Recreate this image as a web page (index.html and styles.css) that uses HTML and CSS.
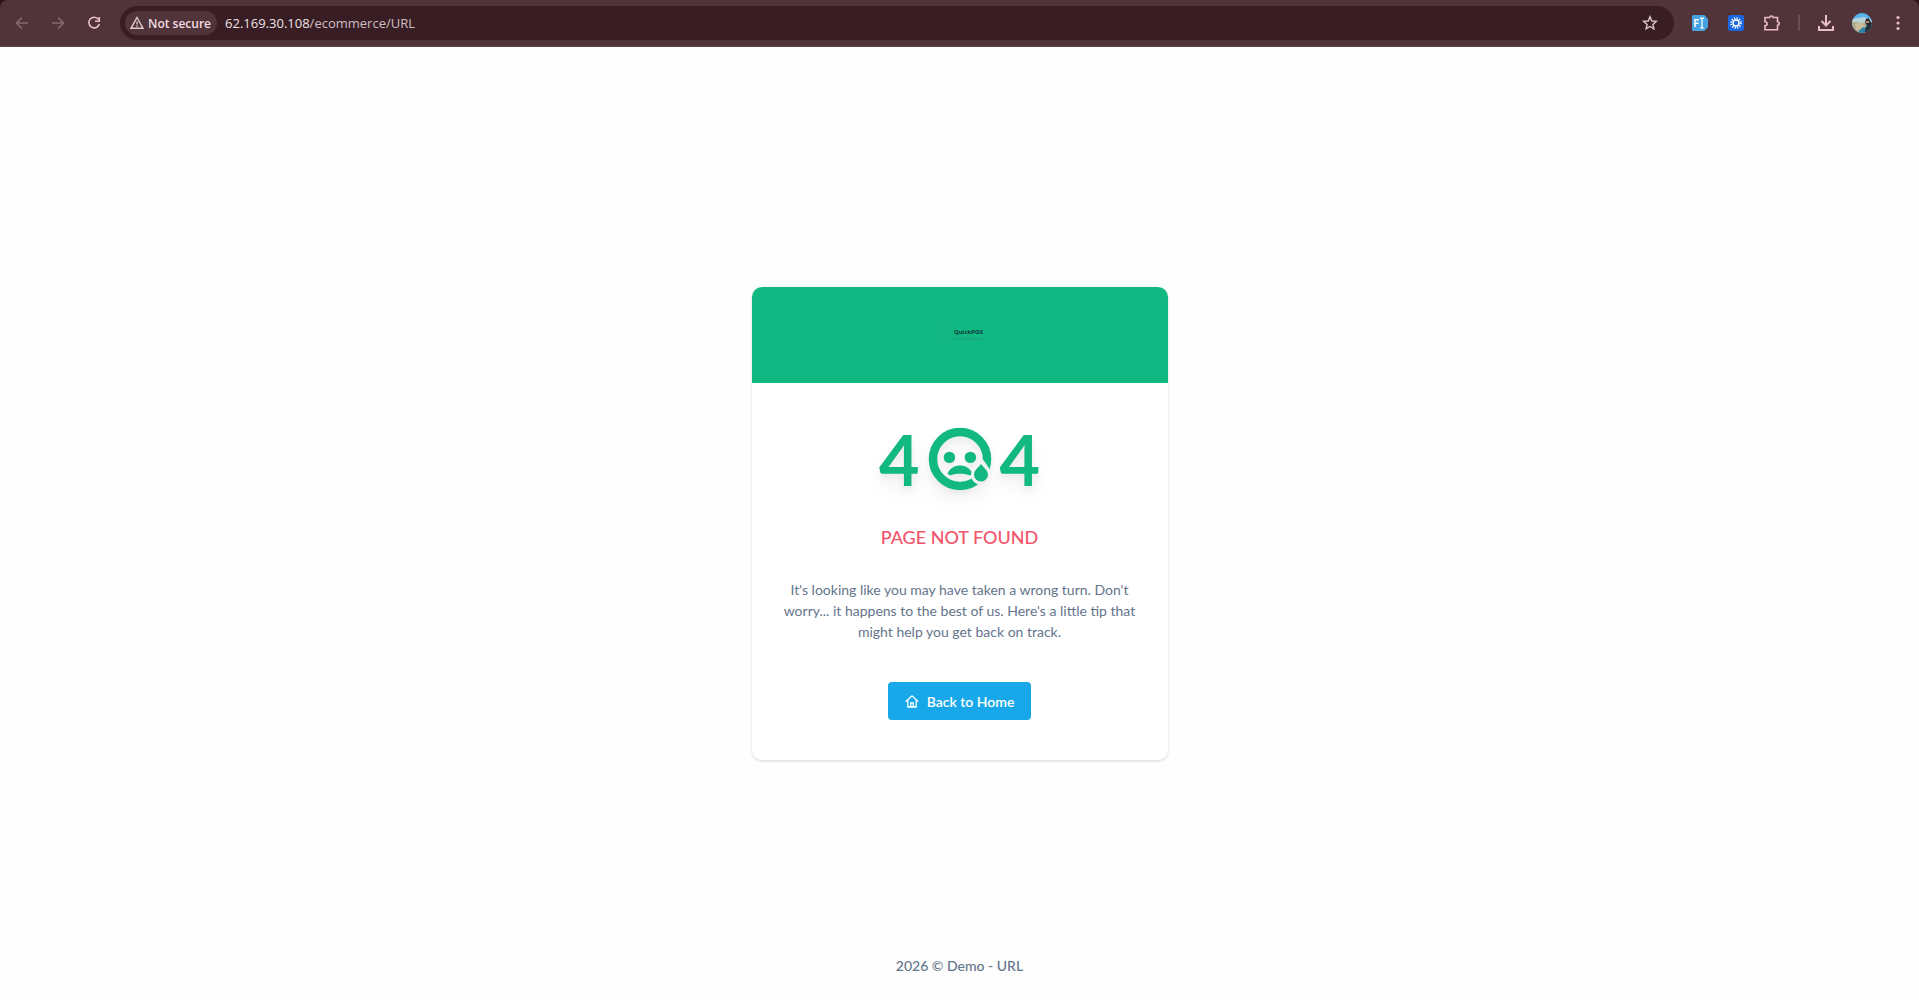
FILE: index.html
```
<!DOCTYPE html>
<html lang="en">
  <head>
    <meta charset="UTF-8">
    <meta name="viewport" content="width=device-width, initial-scale=1.0">
    <title>404 - Page Not Found</title>
    <link rel="stylesheet" href="styles.css">
  </head>
  <body>
    <header class="browser">
      <div class="toolbar">
        <div class="nav-buttons">
          <button class="icon-button disabled" aria-label="Back">
            <svg width="16" height="16" viewBox="0 0 16 16"><path d="M14 8H3M8 2.500 2.500 8 8 13.500"/></svg>
          </button>
          <button class="icon-button disabled" aria-label="Forward">
            <svg width="16" height="16" viewBox="0 0 16 16"><path d="M2 8h11M8 2.500 13.500 8 8 13.500"/></svg>
          </button>
          <button class="icon-button" aria-label="Reload">
            <svg width="16" height="16" viewBox="0 0 16 16"><path d="M12.500 4.500A5.300 5.300 0 1 0 13.300 9M13.300 2v4.200H9"/></svg>
          </button>
        </div>
        <div class="address-bar">
          <button class="security-chip">
            <svg width="16" height="16" viewBox="0 0 16 16"><path d="M8 2.500 14 13.300H2zM8 6.500v3M8 10.600v1.300"/></svg>
            Not secure
          </button>
          <p class="url">62.169.30.108<span>/ecommerce/URL</span></p>
          <button class="star" aria-label="Bookmark">
            <svg width="16" height="16" viewBox="0 0 16 16"><path d="M8 1.800 9.800 6l4.500.4-3.400 3 1 4.400L8 11.500l-3.900 2.300 1-4.400-3.400-3L6.200 6z"/></svg>
          </button>
        </div>
        <div class="extensions">
          <button class="icon-button" aria-label="Text extension">
            <svg class="logo" width="16" height="16" viewBox="0 0 16 16">
              <path fill="#45a3e0" d="M1.500 0H12.500L16 4v8l-3.500 4h-11A1.500 1.500 0 0 1 0 14.500v-13A1.500 1.500 0 0 1 1.500 0z"/>
              <path stroke="#fff" stroke-width="1.500" fill="none" d="M3 12V4.700h4M3 8.300h3.500"/>
              <path stroke="#fff" stroke-width="1.200" fill="none" d="M8 3.200h1.300L10 4l.7-.8H12M8 13h1.300l.7-.8.7.8H12M10 4v8.500"/>
            </svg>
          </button>
          <button class="icon-button" aria-label="Sun extension">
            <svg class="logo" width="16" height="16" viewBox="0 0 16 16">
              <rect width="16" height="16" rx="2.500" fill="#1c68df"/>
              <circle cx="8" cy="8" r="3" stroke="#fff" stroke-width="1.400" fill="none"/>
              <circle cx="8" cy="8" r="4.800" stroke="#fff" stroke-width="2" stroke-dasharray="1.200 1.313" fill="none"/>
            </svg>
          </button>
          <button class="icon-button" aria-label="Extensions">
            <svg width="18" height="18" viewBox="0 0 18 18"><path d="M2 3.500h4.800C6.800 1.400 10.200 1.400 10.200 3.500H14.500V7.800C16.800 7.800 16.800 11.200 14.500 11.200V15.800H2V11.800C4.800 11.500 4.800 8 2 7.700z"/></svg>
          </button>
        </div>
        <div class="divider"></div>
        <div class="profile-buttons">
          <button class="icon-button" aria-label="Downloads">
            <svg width="18" height="18" viewBox="0 0 18 18"><path stroke-width="2" d="M9 1v10M4.500 7 9 11.500 13.500 7M2 12v4h14v-4"/></svg>
          </button>
          <button class="icon-button" aria-label="Profile">
            <svg class="logo" width="20" height="20" viewBox="0 0 20 20">
              <clipPath id="avatar"><circle cx="10" cy="10" r="10"/></clipPath>
              <g clip-path="url(#avatar)">
                <path fill="#58b5ec" d="M0 0h20v20H0z"/>
                <path fill="#b9d3d8" d="M0 6 12 4l8 3v5H0z"/>
                <path fill="#a9a98c" d="M0 9l14 1v10H0z"/>
                <path fill="#c9bd9c" d="M3 11l8-2 1 5-8 4z"/>
                <path fill="#252c34" d="M14 6c2-2 4 0 4 2l2 2v7l-6 3-3-3 4-4-2-4z"/>
                <path fill="#c08962" d="M14 8h3v2h-3z"/>
                <path fill="#2a82a8" d="M7 18l4-4 3 2-2 4H7z"/>
              </g>
            </svg>
          </button>
          <button class="icon-button" aria-label="Menu">
            <svg class="dots" width="16" height="16" viewBox="0 0 16 16"><circle cx="8" cy="2.500" r="1.600"/><circle cx="8" cy="8" r="1.600"/><circle cx="8" cy="13.500" r="1.600"/></svg>
          </button>
        </div>
      </div>
    </header>

    <main class="page">
      <section class="card">
        <div class="card-header">
          <div class="brand">
            <svg width="14" height="16" viewBox="0 0 14 16"><rect x="1" y="1" width="12" height="14" rx="3"/><path d="M6 6h3l-2 3"/></svg>
            <div>
              <p class="brand-name">QuickPOS</p>
              <p class="brand-tagline">Point of Sale System</p>
            </div>
          </div>
        </div>
        <div class="card-body">
          <div class="error-code">
            <span>4</span>
            <!-- sad face used as the zero -->
            <svg width="64" height="64" viewBox="0 0 64 64">
              <mask id="tear-gap">
                <rect width="64" height="64" fill="#fff"/>
                <path d="M53 35C50 39 46 43 46 48a7 7 0 0 0 14 0c0-5-4-9-7-13z" fill="#000" stroke="#000" stroke-width="6"/>
              </mask>
              <g mask="url(#tear-gap)">
                <circle class="face" cx="32" cy="32" r="27"/>
                <path d="M19.500 46.500C22 41 27 38.500 32 38.500S42 41 44.500 46.500L42 48.500C37 46 27 46 22 48.500z"/>
              </g>
              <circle cx="21.400" cy="30.400" r="5.700"/>
              <circle cx="42.400" cy="30.400" r="5.700"/>
              <path d="M53 37C50 41 46 43 46 48a7 6.500 0 0 0 14 0c0-5-4-7-7-11z"/>
            </svg>
            <span>4</span>
          </div>
          <h1 class="title">PAGE NOT FOUND</h1>
          <p class="message">It's looking like you may have taken a wrong turn. Don't worry... it happens to the best of us. Here's a little tip that might help you get back on track.</p>
          <a class="home-link" href="#">
            <svg width="14" height="14" viewBox="0 0 14 14"><path d="M.8 7.500 7 1.800l6.200 5.700M2.800 6v7h8.400V6M5.700 13V9h2.600v4"/></svg>
            Back to Home
          </a>
        </div>
      </section>
      <footer class="footer">2026 © Demo - URL</footer>
    </main>
  </body>
</html>
```

FILE: styles.css
```
* {
    box-sizing: border-box;
}

body {
    margin: 0;
    min-height: 100vh;
    display: flex;
    flex-direction: column;
    background-color: #fefefe;
    color: #64748b;
    font-family: Lato, sans-serif;
    font-size: 14px;
    line-height: 21px;
}

p, h1 {
    margin: 0;
}

button {
    padding: 0;
    border: none;
    background: none;
    font: inherit;
    cursor: pointer;
}

/* Browser bar */
.browser {
    background-color: #2c1519;
    font-family: "Open Sans", sans-serif;
}

.toolbar {
    display: flex;
    align-items: center;
    height: 47px;
    padding: 0 11px 0 12px;
    background-color: #50343a;
    border-bottom: 1px solid #5f474c;
    border-radius: 8px 8px 0 0;
}

.nav-buttons,
.extensions,
.profile-buttons {
    display: flex;
    align-items: center;
    gap: 16px;
}

.icon-button {
    display: flex;
    align-items: center;
    justify-content: center;
    width: 20px;
    height: 20px;
}

.toolbar svg {
    fill: none;
    stroke: #e8bdc9;
    stroke-width: 1.6px;
}

.toolbar svg.logo {
    stroke: none;
}

.toolbar svg.dots {
    fill: #e8bdc9;
    stroke: none;
}

.toolbar .disabled svg {
    stroke: #876a71;
}

.address-bar {
    flex: 1;
    display: flex;
    align-items: center;
    height: 34px;
    margin: 0 16px;
    padding: 0 16px 0 5px;
    border-radius: 17px;
    background-color: #381e24;
}

.security-chip {
    display: flex;
    align-items: center;
    gap: 3px;
    height: 24px;
    padding: 0 6px 0 4px;
    border-radius: 12px;
    background-color: #50343a;
    color: #f3dce2;
    font-size: 12px;
    font-weight: 600;
}

.address-bar svg {
    display: block;
    stroke: #dcc8cd;
    stroke-width: 1.4px;
}

.url {
    flex: 1;
    margin-left: 8px;
    color: #f0e2e5;
    font-size: 13px;
}

.url span {
    color: #cfbec2;
}

.divider {
    width: 2px;
    height: 16px;
    margin: 0 16px;
    background-color: #6b4d54;
}

/* 404 page */
.page {
    flex: 1;
    display: grid;
    grid-template-rows: 1fr auto 1fr;
    justify-items: center;
}

.card {
    grid-row: 2;
    width: 416px;
    max-width: 100%;
    border-radius: 10px;
    background-color: #ffffff;
    box-shadow: 0 1px 3px rgba(0, 0, 0, 0.16);
    overflow: hidden;
}

.card-header {
    display: flex;
    align-items: center;
    justify-content: center;
    height: 96px;
    background-color: #12b881;
}

.brand {
    display: flex;
    align-items: center;
    gap: 4px;
    font-family: "Noto Sans", sans-serif;
}

.brand svg {
    fill: none;
    stroke: #1bb182;
}

.brand-name {
    color: #0b3b3c;
    font-size: 6px;
    font-weight: 700;
    line-height: 7px;
}

.brand-tagline {
    color: #22967a;
    font-size: 3px;
    line-height: 6px;
}

.card-body {
    display: flex;
    flex-direction: column;
    align-items: center;
    padding: 40px 24px;
    text-align: center;
}

.error-code {
    display: flex;
    align-items: center;
    gap: 8px;
    color: #12b881;
    font-size: 70px;
    font-weight: 700;
    line-height: 72px;
    filter: drop-shadow(0 10px 8px rgba(0, 0, 0, 0.06)) drop-shadow(0 4px 3px rgba(0, 0, 0, 0.06));
}

.error-code svg {
    fill: #12b881;
}

.error-code .face {
    fill: none;
    stroke: #12b881;
    stroke-width: 8.5px;
}

.title {
    margin-top: 28px;
    color: #f1556c;
    font-size: 18px;
    font-weight: 500;
    line-height: 28px;
}

.message {
    margin-top: 28px;
}

.home-link {
    display: flex;
    align-items: center;
    gap: 8px;
    height: 38px;
    margin-top: 40px;
    padding: 0 17px;
    border-radius: 4px;
    background-color: #18a7e9;
    color: #ffffff;
    font-weight: 600;
    text-decoration: none;
}

.home-link svg {
    fill: none;
    stroke: #ffffff;
    stroke-width: 1.3px;
}

.footer {
    grid-row: 3;
    align-self: end;
    padding: 24px;
    font-weight: 500;
}
```
